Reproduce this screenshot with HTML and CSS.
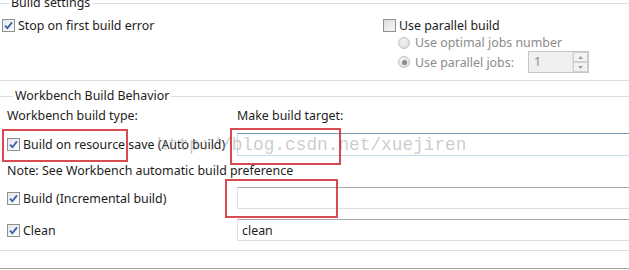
FILE: index.html
```html
<!DOCTYPE html>
<html lang="en">
<head>
<meta charset="UTF-8">
<title>Build settings</title>
<link rel="stylesheet" href="styles.css">
</head>
<body>
    <fieldset class="group group-settings">
        <legend>Build settings</legend>
        <div class="settings-grid">
            <div class="col-left">
                <div class="check-row">
                    <span class="cb checked"><svg width="9" height="9" viewBox="0 0 9 9"><path d="M1 4.6 L3.4 7.2 L8 1.4" fill="none" stroke="#3d5ea3" stroke-width="1.8"/></svg></span>
                    <span class="label">Stop on first build error</span>
                </div>
            </div>
            <div class="col-right">
                <div class="check-row">
                    <span class="cb"></span>
                    <span class="label">Use parallel build</span>
                </div>
                <div class="radio-row row-optimal">
                    <span class="radio"></span>
                    <span class="label disabled">Use optimal jobs number</span>
                </div>
                <div class="radio-row">
                    <span class="radio selected"><span class="dot"></span></span>
                    <span class="label disabled jobs-label">Use parallel jobs:</span>
                    <span class="spinner">
                        <span class="spinner-value">1</span>
                        <span class="spinner-btns">
                            <span class="spin-btn"><svg width="5" height="3" viewBox="0 0 5 3"><path d="M0 3 L2.5 0 L5 3 Z" fill="#9a9a9a"/></svg></span>
                            <span class="spin-btn"><svg width="5" height="3" viewBox="0 0 5 3"><path d="M0 0 L2.5 3 L5 0 Z" fill="#9a9a9a"/></svg></span>
                        </span>
                    </span>
                </div>
            </div>
        </div>
    </fieldset>

    <fieldset class="group group-behavior">
        <legend>Workbench Build Behavior</legend>
        <div class="behavior-grid">
            <div class="label head">Workbench build type:</div>
            <div class="label head">Make build target:</div>

            <div class="check-row row-auto">
                <span class="cb checked"><svg width="9" height="9" viewBox="0 0 9 9"><path d="M1 4.6 L3.4 7.2 L8 1.4" fill="none" stroke="#3d5ea3" stroke-width="1.8"/></svg></span>
                <span class="label">Build on resource save (Auto build)</span>
            </div>
            <div class="row-auto"><input class="field field-focus" type="text"></div>

            <div class="label note">Note: See Workbench automatic build preference</div>

            <div class="check-row row-build">
                <span class="cb checked"><svg width="9" height="9" viewBox="0 0 9 9"><path d="M1 4.6 L3.4 7.2 L8 1.4" fill="none" stroke="#3d5ea3" stroke-width="1.8"/></svg></span>
                <span class="label">Build (Incremental build)</span>
            </div>
            <div class="row-build"><input class="field" type="text"></div>

            <div class="check-row row-clean">
                <span class="cb checked"><svg width="9" height="9" viewBox="0 0 9 9"><path d="M1 4.6 L3.4 7.2 L8 1.4" fill="none" stroke="#3d5ea3" stroke-width="1.8"/></svg></span>
                <span class="label">Clean</span>
            </div>
            <div class="row-clean"><input class="field" type="text" value="clean"></div>
        </div>
    </fieldset>

    <div class="bottom-rule"></div>

    <!-- annotations drawn over the screenshot -->
    <div class="watermark">http://blog.csdn.net/xuejiren</div>
    <div class="mark mark-auto"></div>
    <div class="mark mark-target"></div>
    <div class="mark mark-build"></div>
</body>
</html>
```

FILE: styles.css
```css
body {
    margin: 0;
    width: 629px;
    height: 270px;
    overflow: hidden;
    position: relative;
    background-color: #fff;
    font-family: "Noto Sans", "Liberation Sans", sans-serif;
    font-size: 12.4px;
    color: #1c1c1c;
}

.group {
    border: 1px solid #d5dfe5;
    margin: 0 -2px;
    padding: 0;
    min-width: 0;
}

.group legend {
    line-height: 16px;
    padding: 0 2px;
    margin-left: 6px;
}

.group-settings {
    margin-top: -5px;
    padding: 5px 0 7px 3px;
}

.group-settings legend {
    margin-left: 7px;
}

.group-behavior {
    margin-top: 7px;
    padding: 4px 0 9px 8px;
}

.group-behavior legend {
    margin-left: 6px;
}

.settings-grid {
    display: grid;
    grid-template-columns: 381px 1fr;
}

.check-row {
    display: flex;
    align-items: center;
    height: 18px;
}

.cb {
    width: 11px;
    height: 11px;
    border: 1px solid #8e8f8f;
    background: linear-gradient(135deg, #dcdcdc, #f8f8f8);
    margin-right: 3px;
    display: flex;
    align-items: center;
    justify-content: center;
    flex-shrink: 0;
}

.cb.checked {
    background: linear-gradient(135deg, #e4e8f0, #fafbfd);
}

.radio-row {
    display: flex;
    align-items: center;
    padding-left: 15px;
    height: 22px;
}

.row-optimal {
    height: 17px;
}

.radio {
    width: 10px;
    height: 10px;
    border: 1px solid #c3c3c3;
    border-radius: 50%;
    background: radial-gradient(circle at 40% 35%, #f4f4f4, #d8d8d8);
    margin-right: 5px;
    display: flex;
    align-items: center;
    justify-content: center;
}

.radio .dot {
    width: 5px;
    height: 5px;
    border-radius: 50%;
    background-color: #8a8a8a;
}

.disabled {
    color: #8c8c8c;
}

.jobs-label {
    width: 113px;
}

.spinner {
    display: flex;
    width: 59px;
    height: 20px;
    border: 1px solid #c6c6c6;
    background-color: #f0f0f0;
}

.spinner-value {
    flex: 1;
    padding-left: 5px;
    line-height: 20px;
    color: #8c8c8c;
}

.spinner-btns {
    display: flex;
    flex-direction: column;
    width: 15px;
    border-left: 1px solid #e0e0e0;
}

.spin-btn {
    flex: 1;
    display: flex;
    align-items: center;
    justify-content: center;
    border: 1px solid #d0d0d0;
    background-color: #f2f2f2;
}

.behavior-grid {
    display: grid;
    grid-template-columns: 230px 1fr;
    align-items: center;
}

.head {
    height: 16px;
    line-height: 16px;
}

.row-auto {
    margin-top: 9px;
}

.row-build {
    margin-top: 8px;
}

.row-clean {
    margin-top: 10px;
}

.note {
    grid-column: 1 / 3;
    margin-top: 7px;
    line-height: 16px;
}

.field {
    display: block;
    box-sizing: border-box;
    width: 420px;
    height: 22px;
    margin: 0;
    padding: 0 4px;
    border: 1px solid #dedede;
    border-top-color: #ababab;
    font-family: inherit;
    font-size: 12.4px;
    color: #1c1c1c;
    background-color: #fff;
    outline: none;
}

.field-focus {
    height: 23px;
    border-color: #c9dbe6;
    border-top-color: #7a9eb9;
}

.bottom-rule {
    margin-top: 17px;
    border-top: 1px solid #a0a0a0;
}

.watermark {
    position: absolute;
    left: 157px;
    top: 135px;
    font-family: "Liberation Mono", monospace;
    font-size: 17.8px;
    line-height: 20px;
    color: rgba(140, 140, 140, 0.45);
}

.mark {
    position: absolute;
    box-sizing: border-box;
    border: 2px solid rgba(208, 30, 36, 0.8);
}

.mark-auto {
    left: 2px;
    top: 129px;
    width: 126px;
    height: 33px;
}

.mark-target {
    left: 230px;
    top: 128px;
    width: 111px;
    height: 37px;
}

.mark-build {
    left: 225px;
    top: 179px;
    width: 113px;
    height: 39px;
}
```
